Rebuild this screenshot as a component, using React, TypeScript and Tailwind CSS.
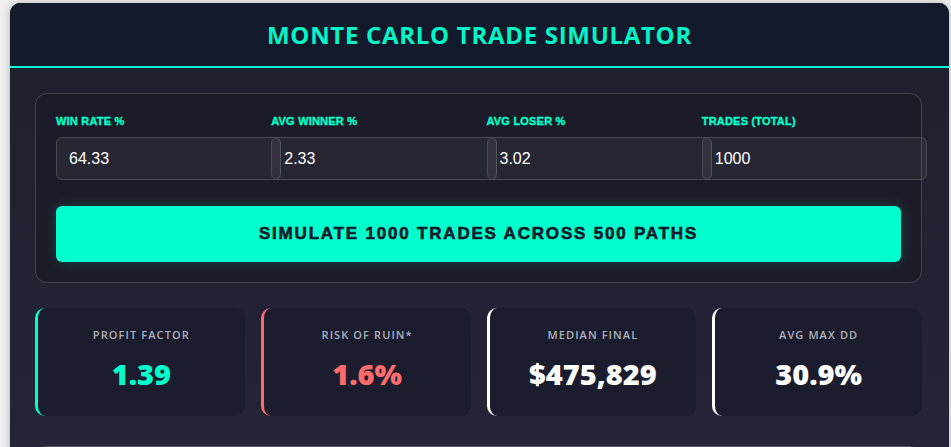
import { useState } from 'react';

interface Stat {
  label: string;
  value: string;
  accent: string;
  valueColor: string;
}

const stats: Stat[] = [
  { label: 'Profit Factor', value: '1.39', accent: 'border-l-[#00ffcc]', valueColor: 'text-[#00ffcc]' },
  { label: 'Risk of Ruin*', value: '1.6%', accent: 'border-l-[#ff6b6b]', valueColor: 'text-[#ff6b6b]' },
  { label: 'Median Final', value: '$475,829', accent: 'border-l-white', valueColor: 'text-white' },
  { label: 'Avg Max DD', value: '30.9%', accent: 'border-l-white', valueColor: 'text-white' },
];

export default function App() {
  const [winRate, setWinRate] = useState('64.33');
  const [avgWinner, setAvgWinner] = useState('2.33');
  const [avgLoser, setAvgLoser] = useState('3.02');
  const [trades, setTrades] = useState('1000');

  const fields = [
    { label: 'Win Rate %', value: winRate, set: setWinRate },
    { label: 'Avg Winner %', value: avgWinner, set: setAvgWinner },
    { label: 'Avg Loser %', value: avgLoser, set: setAvgLoser },
    { label: 'Trades (Total)', value: trades, set: setTrades },
  ];

  return (
    <div className="min-h-[447px] bg-[#efefef] pl-[10px] pt-[3px] overflow-hidden">
      <div className="w-[939px] rounded-t-[10px] overflow-hidden bg-gradient-to-b from-[#201f2e] to-[#262539] shadow-[0_0_8px_rgba(0,0,0,0.25)]">
        {/* header */}
        <div className="h-[65px] bg-[#131a2b] border-b-2 border-[#00ffcc] flex items-center justify-center">
          <h1 className="text-[24px] font-bold tracking-[0.7px] text-[#00f5c8] font-['Open_Sans',sans-serif] leading-none">
            MONTE CARLO TRADE SIMULATOR
          </h1>
        </div>

        <div className="pl-[25px] pr-[27px] pt-[25px]">
          {/* inputs panel */}
          <div className="rounded-[12px] border border-[#45444f] bg-[#1c1b29] px-5 pt-5 pb-5">
            <div className="grid grid-cols-4 gap-4">
              {fields.map((f) => (
                <label key={f.label} className="flex flex-col">
                  <span className="mb-[9px] text-[11px] leading-[14px] font-black uppercase tracking-[0.2px] text-[#00ffcc] [-webkit-text-stroke:0.35px_#00ffcc] font-['Liberation_Sans',Arial,sans-serif]">
                    {f.label}
                  </span>
                  <input
                    value={f.value}
                    onChange={(e) => f.set(e.target.value)}
                    className="box-content w-full px-3 py-3 h-[17px] rounded-[6px] border border-[#4b4a55] bg-[rgba(255,255,255,0.05)] text-[16px] text-white outline-none font-['Liberation_Sans',Arial,sans-serif]"
                  />
                </label>
              ))}
            </div>

            <button className="mt-[26px] w-full h-[56px] rounded-[6px] bg-[#00ffcc] text-[#131a2b] text-[17px] font-black tracking-[1.8px] uppercase [-webkit-text-stroke:0.6px_#131a2b] font-['Liberation_Sans',Arial,sans-serif] shadow-[0_0_14px_rgba(0,255,204,0.18)]">
              Simulate {trades} Trades Across 500 Paths
            </button>
          </div>

          {/* stats */}
          <div className="mt-[25px] grid grid-cols-4 gap-4">
            {stats.map((s) => (
              <div
                key={s.label}
                className={`h-[108px] rounded-[10px] border-l-[3px] ${s.accent} bg-[#1b1c2e] flex flex-col items-center pt-[20px]`}
              >
                <div className="text-[11px] leading-[14px] font-semibold uppercase tracking-[1.1px] text-[#b0b0bc] font-['Open_Sans',sans-serif]">
                  {s.label}
                </div>
                <div className={`mt-[15px] text-[29px] leading-[34px] font-extrabold ${s.valueColor} font-['Open_Sans',sans-serif]`}>
                  {s.value}
                </div>
              </div>
            ))}
          </div>

          {/* next panel, cut off */}
          <div className="mt-[30px] h-[40px] rounded-t-[12px] border border-[#55545e] bg-[#1c1b29]" />
        </div>
      </div>
    </div>
  );
}
